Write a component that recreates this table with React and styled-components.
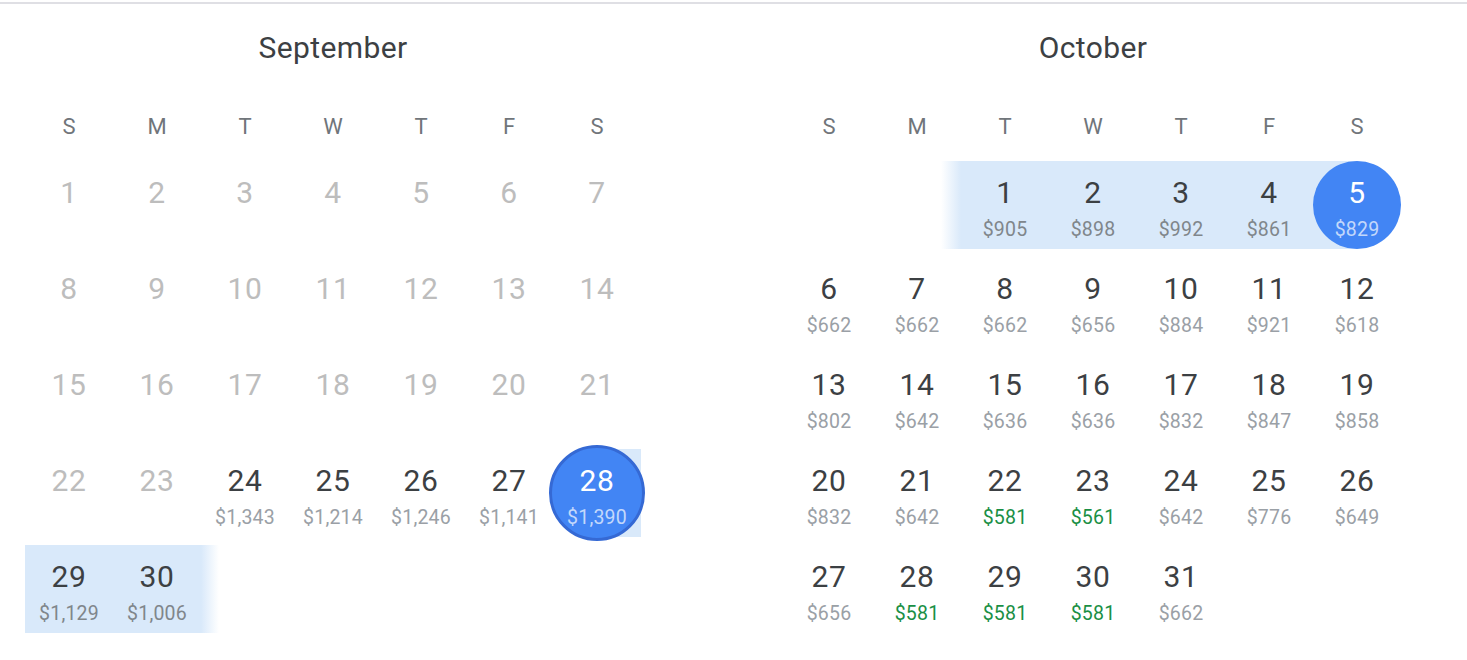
import React from 'react';
import styled, { createGlobalStyle, css } from 'styled-components';

const GlobalStyle = createGlobalStyle`
  html, body {
    margin: 0;
    padding: 0;
    background: #fff;
    font-family: Roboto, "Liberation Sans", Arial, sans-serif;
  }
`;

const BAND = '#d9e9fa';

const weekdays = ['S', 'M', 'T', 'W', 'T', 'F', 'S'];

const septPrices = {
  24: '$1,343', 25: '$1,214', 26: '$1,246', 27: '$1,141',
  28: '$1,390', 29: '$1,129', 30: '$1,006',
};

const octPrices = {
  1: '$905', 2: '$898', 3: '$992', 4: '$861', 5: '$829',
  6: '$662', 7: '$662', 8: '$662', 9: '$656', 10: '$884', 11: '$921', 12: '$618',
  13: '$802', 14: '$642', 15: '$636', 16: '$636', 17: '$832', 18: '$847', 19: '$858',
  20: '$832', 21: '$642', 22: '$581', 23: '$561', 24: '$642', 25: '$776', 26: '$649',
  27: '$656', 28: '$581', 29: '$581', 30: '$581', 31: '$662',
};

const cheap = [22, 23, 28, 29, 30];

const months = [
  {
    name: 'September',
    offset: 0,
    days: 30,
    day: (d) => ({
      price: septPrices[d],
      disabled: d < 24,
      band: d === 28 ? 'right' : d >= 29 ? 'full' : null,
      fadeRight: d === 30,
      selected: d === 28 ? 'focus' : null,
    }),
  },
  {
    name: 'October',
    offset: 2,
    days: 31,
    day: (d) => ({
      price: octPrices[d],
      green: cheap.includes(d),
      band: d < 5 ? 'full' : d === 5 ? 'left' : null,
      fadeLeft: d === 1,
      selected: d === 5 ? 'plain' : null,
    }),
  },
];

const Page = styled.div`
  margin-top: 2px;
  border-top: 2px solid #dfdfe4;
  height: 656px;
  display: flex;
  gap: 144px;
  padding-left: 25px;
`;

const Month = styled.section`
  width: 616px;
  padding-top: 24px;
`;

const Title = styled.h2`
  margin: 0;
  height: 40px;
  line-height: 40px;
  text-align: center;
  font-size: 30px;
  font-weight: 400;
  letter-spacing: 0.4px;
  color: #3c4043;
`;

const Grid = styled.div`
  display: grid;
  grid-template-columns: repeat(7, 88px);
`;

const WeekRow = styled(Grid)`
  margin-top: 39px;
  margin-bottom: 10px;
`;

const Weekday = styled.div`
  height: 40px;
  line-height: 40px;
  text-align: center;
  font-size: 22px;
  color: #70757a;
`;

const DayGrid = styled(Grid)`
  grid-auto-rows: 96px;
`;

const Cell = styled.div`
  position: relative;
  display: flex;
  flex-direction: column;
  align-items: center;
  padding-top: 20px;
  box-sizing: border-box;
  ${(p) => p.$start && css`grid-column-start: ${p.$start};`}

  ${(p) => p.$band && css`
    &::before {
      content: '';
      position: absolute;
      top: 4px;
      bottom: 4px;
      left: ${p.$band === 'right' ? '50%' : '0'};
      right: ${p.$band === 'left' ? '50%' : '0'};
      background: ${BAND};
    }
  `}

  ${(p) => (p.$fadeLeft || p.$fadeRight) && css`
    &::after {
      content: '';
      position: absolute;
      top: 4px;
      bottom: 4px;
      width: 20px;
      ${p.$fadeLeft ? 'left: -20px;' : 'right: -18px; width: 18px;'}
      background: linear-gradient(
        ${p.$fadeLeft ? 'to right' : 'to left'},
        rgba(217, 233, 250, 0),
        ${BAND}
      );
    }
  `}
`;

const Circle = styled.div`
  position: absolute;
  left: 50%;
  top: 50%;
  transform: translate(-50%, -50%);
  border-radius: 50%;
  background: #4285f4;
  box-sizing: border-box;
  ${(p) => p.$variant === 'focus'
    ? css`
      width: 96px;
      height: 96px;
      border: 3px solid #3569d4;
    `
    : css`
      width: 88px;
      height: 88px;
    `}
`;

const Num = styled.span`
  position: relative;
  line-height: 32px;
  font-size: 30px;
  letter-spacing: 0.6px;
  color: ${(p) => (p.$selected ? '#fff' : p.$disabled ? '#bdbdbd' : '#3c4043')};
`;

const Price = styled.span`
  position: relative;
  margin-top: 10px;
  line-height: 22px;
  font-size: 19.5px;
  letter-spacing: 0.2px;
  color: ${(p) => (p.$selected ? '#c3d8fb' : p.$green ? '#1a8f45' : p.$inBand ? '#80868b' : '#9aa0a6')};
`;

function Day({ n, info, start }) {
  const sel = !!info.selected;
  return (
    <Cell
      $start={start}
      $band={info.band}
      $fadeLeft={info.fadeLeft}
      $fadeRight={info.fadeRight}
    >
      {sel && <Circle $variant={info.selected} />}
      <Num $selected={sel} $disabled={info.disabled}>{n}</Num>
      {info.price && (
        <Price $selected={sel} $green={info.green} $inBand={!!info.band}>
          {info.price}
        </Price>
      )}
    </Cell>
  );
}

function MonthView({ month }) {
  const days = Array.from({ length: month.days }, (_, i) => i + 1);
  return (
    <Month>
      <Title>{month.name}</Title>
      <WeekRow>
        {weekdays.map((w, i) => <Weekday key={i}>{w}</Weekday>)}
      </WeekRow>
      <DayGrid>
        {days.map((d) => (
          <Day
            key={d}
            n={d}
            info={month.day(d)}
            start={d === 1 && month.offset ? month.offset + 1 : null}
          />
        ))}
      </DayGrid>
    </Month>
  );
}

export default function App() {
  return (
    <>
      <GlobalStyle />
      <Page>
        {months.map((m) => <MonthView key={m.name} month={m} />)}
      </Page>
    </>
  );
}
